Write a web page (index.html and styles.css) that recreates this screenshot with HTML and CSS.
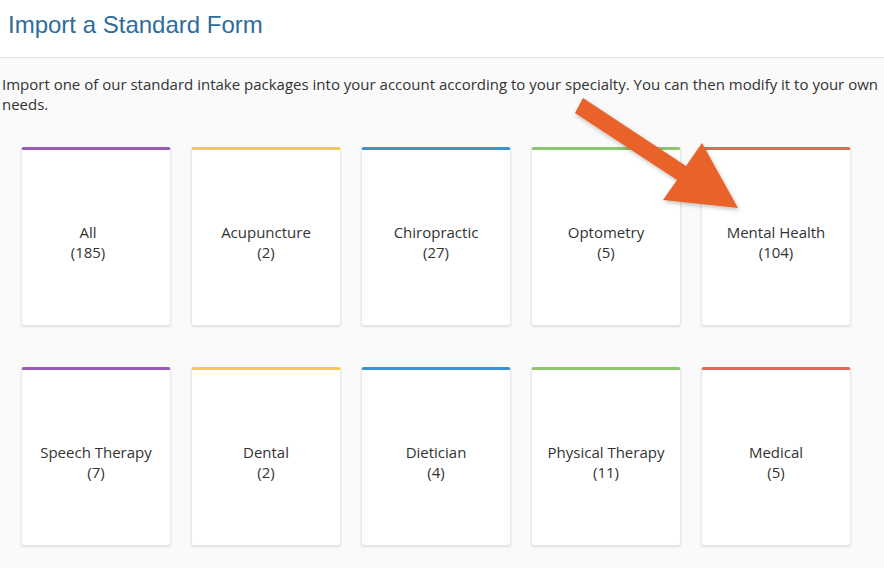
FILE: index.html
```html
<!DOCTYPE html>
<html>
<head>
<meta charset="utf-8">
<title>Import a Standard Form</title>
<link rel="stylesheet" href="styles.css">
</head>
<body>
<header class="header">
  <h1 class="title">Import a Standard Form</h1>
</header>
<main class="content">
  <p class="intro">Import one of our standard intake packages into your account according to your specialty. You can then modify it to your own needs.</p>
  <div class="grid">
    <div class="card c-purple card-all"><span>All</span><span>(185)</span></div>
    <div class="card c-yellow"><span>Acupuncture</span><span>(2)</span></div>
    <div class="card c-blue"><span>Chiropractic</span><span>(27)</span></div>
    <div class="card c-green"><span>Optometry</span><span>(5)</span></div>
    <div class="card c-red"><span>Mental Health</span><span>(104)</span></div>
    <div class="card c-purple"><span>Speech Therapy</span><span>(7)</span></div>
    <div class="card c-yellow"><span>Dental</span><span>(2)</span></div>
    <div class="card c-blue"><span>Dietician</span><span>(4)</span></div>
    <div class="card c-green"><span>Physical Therapy</span><span>(11)</span></div>
    <div class="card c-red"><span>Medical</span><span>(5)</span></div>
  </div>
</main>
<svg class="arrow" width="884" height="568" viewBox="0 0 884 568" xmlns="http://www.w3.org/2000/svg">
  <defs>
    <filter id="sh" x="-20%" y="-20%" width="140%" height="140%">
      <feDropShadow dx="1" dy="2" stdDeviation="2" flood-color="#000" flood-opacity="0.25"/>
    </filter>
  </defs>
  <polygon points="583,98 686,166 702,143 738,208 663,200 677,180 575,113" fill="#e8622b" filter="url(#sh)"/>
</svg>
</body>
</html>
```
FILE: styles.css
```css
html, body {
  margin: 0;
  padding: 0;
}
body {
  background: #fafafa;
  width: 884px;
  height: 568px;
  overflow: hidden;
  position: relative;
  font-family: "Open Sans", "DejaVu Sans", sans-serif;
  color: #333;
}
.header {
  background: #fff;
  height: 58px;
  border-bottom: 1px solid #e3e3e3;
  box-sizing: border-box;
  padding: 10px 0 0 8px;
}
.title {
  margin: 0;
  font-family: "Liberation Sans", Arial, sans-serif;
  font-weight: normal;
  font-size: 24px;
  line-height: 30px;
  color: #2e6c9b;
}
.content {
  padding: 16px 0 0 2px;
}
.intro {
  margin: 0;
  font-size: 15px;
  line-height: 20px;
  color: #333;
}
.grid {
  display: grid;
  grid-template-columns: repeat(5, 150px);
  column-gap: 20px;
  row-gap: 41px;
  margin: 33px 0 0 19px;
}
.card {
  height: 179px;
  box-sizing: border-box;
  background: #fff;
  border: 1px solid #e8e8e8;
  border-top: 3px solid;
  border-radius: 3px;
  box-shadow: 0 1px 2px rgba(0, 0, 0, 0.12);
  display: flex;
  flex-direction: column;
  align-items: center;
  justify-content: center;
  padding-top: 9px;
  font-size: 15px;
  line-height: 20px;
  color: #333;
}
.card-all {
  padding-right: 16px;
}
.c-purple { border-top-color: #9b5bb5; }
.c-yellow { border-top-color: #f4cc4b; }
.c-blue { border-top-color: #3a93d5; }
.c-green { border-top-color: #8cc66f; }
.c-red { border-top-color: #e0685a; }
.arrow {
  position: absolute;
  left: 0;
  top: 0;
  pointer-events: none;
}
```
